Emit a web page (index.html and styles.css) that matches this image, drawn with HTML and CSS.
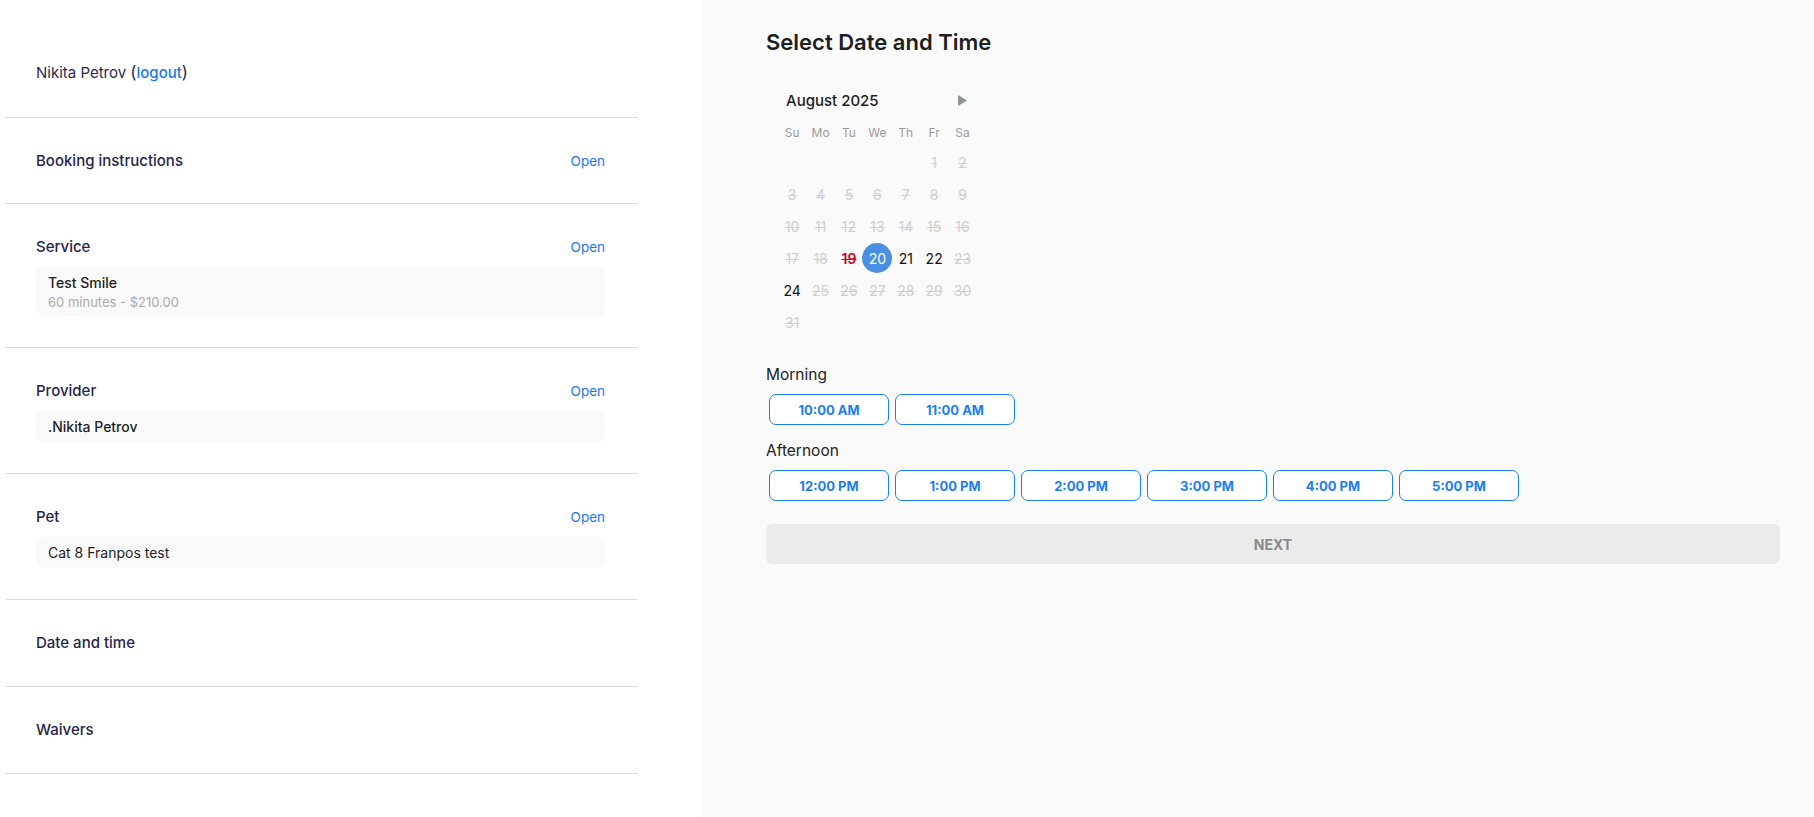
FILE: index.html
```html
<!DOCTYPE html>
<html lang="en">

<head>
    <meta charset="UTF-8">
    <meta name="viewport" content="width=device-width, initial-scale=1.0">
    <title>Booking - Select Date and Time</title>
    <link rel="stylesheet" href="styles.css">
</head>

<body>
    <div class="sidebar">
        <div class="user">Nikita Petrov <span class="paren">(</span><a href="#" class="logout">logout</a><span class="paren">)</span></div>

        <div class="section">
            <div class="section-head">
                <span class="section-title">Booking instructions</span>
                <a href="#" class="open-link">Open</a>
            </div>
        </div>

        <div class="section">
            <div class="section-head">
                <span class="section-title">Service</span>
                <a href="#" class="open-link">Open</a>
            </div>
            <div class="card">
                <div class="card-main">Test Smile</div>
                <div class="card-sub">60 minutes - $210.00</div>
            </div>
        </div>

        <div class="section">
            <div class="section-head">
                <span class="section-title">Provider</span>
                <a href="#" class="open-link">Open</a>
            </div>
            <div class="card">
                <div class="card-main">.Nikita Petrov</div>
            </div>
        </div>

        <div class="section">
            <div class="section-head">
                <span class="section-title">Pet</span>
                <a href="#" class="open-link">Open</a>
            </div>
            <div class="card">
                <div class="card-main light">Cat 8 Franpos test</div>
            </div>
        </div>

        <div class="section closed">
            <div class="section-head">
                <span class="section-title">Date and time</span>
            </div>
        </div>

        <div class="section closed last">
            <div class="section-head">
                <span class="section-title">Waivers</span>
            </div>
        </div>
    </div>

    <div class="main">
        <h1>Select Date and Time</h1>

        <div class="calendar">
            <div class="cal-head">
                <span class="month">August 2025</span>
                <svg class="next-month" width="9" height="11" viewBox="0 0 9 11"><polygon points="0,0 9,5.5 0,11" fill="#8c9393"/></svg>
            </div>
            <div class="cal-grid weekdays">
                <span>Su</span><span>Mo</span><span>Tu</span><span>We</span><span>Th</span><span>Fr</span><span>Sa</span>
            </div>
            <div class="cal-grid days">
                <span></span><span></span><span></span><span></span><span></span>
                <span class="day off">1</span><span class="day off">2</span>
                <span class="day off">3</span><span class="day off">4</span><span class="day off">5</span><span class="day off">6</span><span class="day off">7</span><span class="day off">8</span><span class="day off">9</span>
                <span class="day off">10</span><span class="day off">11</span><span class="day off">12</span><span class="day off">13</span><span class="day off">14</span><span class="day off">15</span><span class="day off">16</span>
                <span class="day off">17</span><span class="day off">18</span><span class="day blocked">19</span><span class="day"><b class="selected">20</b></span><span class="day">21</span><span class="day">22</span><span class="day off">23</span>
                <span class="day">24</span><span class="day off">25</span><span class="day off">26</span><span class="day off">27</span><span class="day off">28</span><span class="day off">29</span><span class="day off">30</span>
                <span class="day off">31</span>
            </div>
        </div>

        <div class="period">Morning</div>
        <div class="slots">
            <button class="slot">10:00 AM</button>
            <button class="slot">11:00 AM</button>
        </div>

        <div class="period">Afternoon</div>
        <div class="slots">
            <button class="slot">12:00 PM</button>
            <button class="slot">1:00 PM</button>
            <button class="slot">2:00 PM</button>
            <button class="slot">3:00 PM</button>
            <button class="slot">4:00 PM</button>
            <button class="slot">5:00 PM</button>
        </div>

        <button class="next-btn" disabled>NEXT</button>
    </div>
</body>

</html>
```

FILE: styles.css
```css
body {
    margin: 0;
    font-family: Inter, "Noto Sans", sans-serif;
    color: #222;
    background: #fff;
    display: flex;
    min-height: 100vh;
}

a {
    text-decoration: none;
}

/* left column */
.sidebar {
    width: 633px;
    margin-left: 5px;
    flex-shrink: 0;
}

.user {
    padding: 61px 31px 33px;
    font-size: 15px;
    line-height: 22px;
    color: #2b2b4d;
}

.paren {
    font-size: 17px;
}

.logout {
    color: #1a77ee;
    font-weight: 500;
}

.section {
    border-top: 1px solid #dcdcdc;
    padding: 32px 33px 31px 31px;
}

.section.closed {
    padding-bottom: 32px;
}

.section.last {
    border-bottom: 1px solid #dcdcdc;
}

.section-head {
    display: flex;
    justify-content: space-between;
    align-items: baseline;
    line-height: 22px;
}

.section-title {
    font-size: 15px;
    font-weight: 500;
    color: #25254a;
}

.open-link {
    font-size: 13.5px;
    color: #1a77ee;
}

.card {
    background: #f9f9f9;
    border-radius: 8px;
    margin-top: 9px;
    padding: 5px 12px;
}

.card-main {
    font-size: 14px;
    font-weight: 500;
    line-height: 21px;
    color: #1f1f1f;
}

.card-main.light {
    font-weight: 400;
}

.card-sub {
    font-size: 13px;
    line-height: 18px;
    color: #ababab;
}

/* right panel */
.main {
    flex: 1;
    margin-left: 64px;
    background: #fafafa;
    padding: 27px 34px 0 64px;
}

h1 {
    margin: 0;
    font-size: 22px;
    line-height: 30px;
    font-weight: 600;
    color: #1e1e1e;
}

.calendar {
    margin: 32px 0 0 12px;
    width: 199px;
}

.cal-head {
    display: flex;
    justify-content: space-between;
    align-items: center;
    height: 22px;
    padding-left: 8px;
    padding-right: 10px;
}

.month {
    font-size: 15px;
    font-weight: 500;
    color: #1e1e1e;
}

.cal-grid {
    display: grid;
    grid-template-columns: repeat(7, 28.4px);
}

.weekdays {
    margin-top: 12px;
    line-height: 20px;
    font-size: 12px;
    color: #9a9a9a;
    text-align: center;
}

.days {
    margin-top: 3px;
    grid-auto-rows: 32px;
}

.day {
    display: flex;
    justify-content: center;
    align-items: center;
    font-size: 14px;
    color: #111;
}

.day.off {
    color: #cfcfcf;
    text-decoration: line-through;
}

.day.blocked {
    color: #d0021b;
    font-weight: 600;
    text-decoration: line-through;
}

.selected {
    flex-shrink: 0;
    width: 30px;
    height: 30px;
    border-radius: 50%;
    background: #4a90e2;
    color: #fff;
    font-weight: 400;
    display: flex;
    justify-content: center;
    align-items: center;
}

.period {
    font-size: 15.5px;
    line-height: 22px;
    color: #222;
    margin-top: 26px;
}

.slots + .period {
    margin-top: 12px;
}

.slots {
    display: flex;
    margin-top: 5px;
}

.slot {
    width: 120px;
    height: 31px;
    margin: 3px;
    border: 1px solid #1a7ef2;
    border-radius: 7px;
    background: #fff;
    color: #1a7ef2;
    font-family: Inter, sans-serif;
    font-size: 13px;
    font-weight: 700;
    cursor: pointer;
}

.next-btn {
    display: block;
    width: 100%;
    height: 40px;
    margin-top: 20px;
    border: none;
    border-radius: 6px;
    background: #ebebeb;
    color: #8a8a8a;
    font-family: Inter, sans-serif;
    font-size: 14px;
    font-weight: 700;
}
```
